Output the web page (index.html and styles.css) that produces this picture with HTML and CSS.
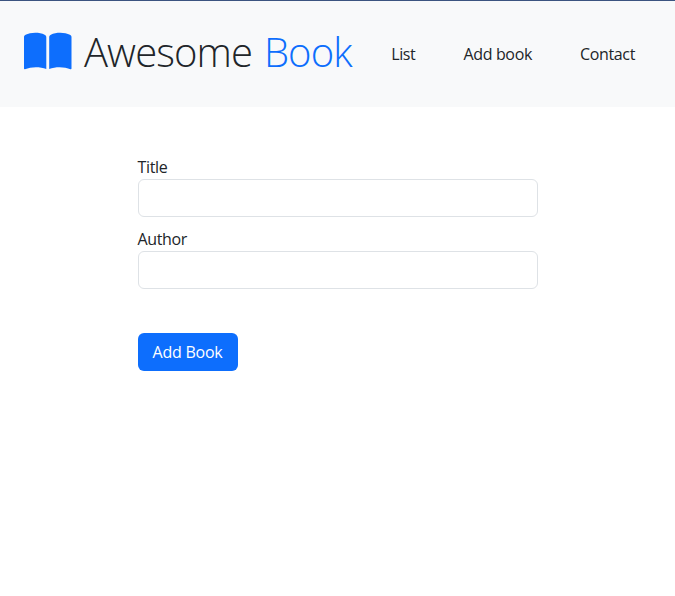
FILE: index.html
```html
<!DOCTYPE html>
<html lang="en">
<head>
<meta charset="utf-8">
<title>Awesome Book</title>
<link rel="stylesheet" href="styles.css">
</head>
<body>
<header class="navbar">
  <a class="brand">
    <svg class="brand-icon" viewBox="0 0 48 48" fill="currentColor"><path d="M0 11.2C0 10 .5 9.3 1.6 8.8C6.500 6.100 15.500 6 20.600 8.700C21.800 9.300 22.300 10 22.300 11.200V43C16 40.500 7 40.600 1 43.200Q0 43.400 0 42.500Z"/><path d="M25.200 11.200C25.200 10 25.700 9.300 26.900 8.700C32 6 41 6.100 45.900 8.800C47 9.300 47.500 10 47.500 11.200V42.500Q47.500 43.400 46.500 43.200C40.500 40.600 31.500 40.500 25.200 43Z"/></svg>
    <span class="brand-text">Awesome <span class="accent">Book</span></span>
  </a>
  <nav class="links"><a>List</a><a>Add book</a><a>Contact</a></nav>
</header>
<main>
  <form class="book-form">
    <label for="title">Title</label>
    <input id="title" type="text">
    <label for="author">Author</label>
    <input id="author" type="text">
    <button type="button">Add Book</button>
  </form>
</main>
</body>
</html>
```
FILE: styles.css
```css
* { box-sizing: border-box; }
body { margin: 0; background: #fff; color: #212529; font: 16px/24px "Open Sans", "Noto Sans", sans-serif; letter-spacing: -0.35px; }
.navbar { height: 107px; padding: 0 40px 0 24px; border-top: 1px solid #3b5480; background: #f8f9fa; display: flex; align-items: center; }
.brand { display: flex; align-items: center; padding-bottom: 4px; }
.brand-icon { width: 48px; height: 48px; margin-bottom: 4px; color: #0d6efd; }
.brand-text { margin-left: 12px; font-size: 40px; font-weight: 300; letter-spacing: -0.9px; word-spacing: 2.4px; white-space: nowrap; }
.accent { color: #0d6efd; }
.links { margin-left: auto; display: flex; gap: 48px; white-space: nowrap; }
.book-form { width: 400px; margin: 48px auto 0; display: flex; flex-direction: column; }
input { height: 38px; margin-bottom: 10px; border: 1px solid #dee2e6; border-radius: 6px; }
button { align-self: flex-start; width: 100px; height: 38px; margin-top: 34px; border: 0; border-radius: 6px; background: #0d6efd; color: #fff; font: inherit; letter-spacing: -0.25px; }
```
